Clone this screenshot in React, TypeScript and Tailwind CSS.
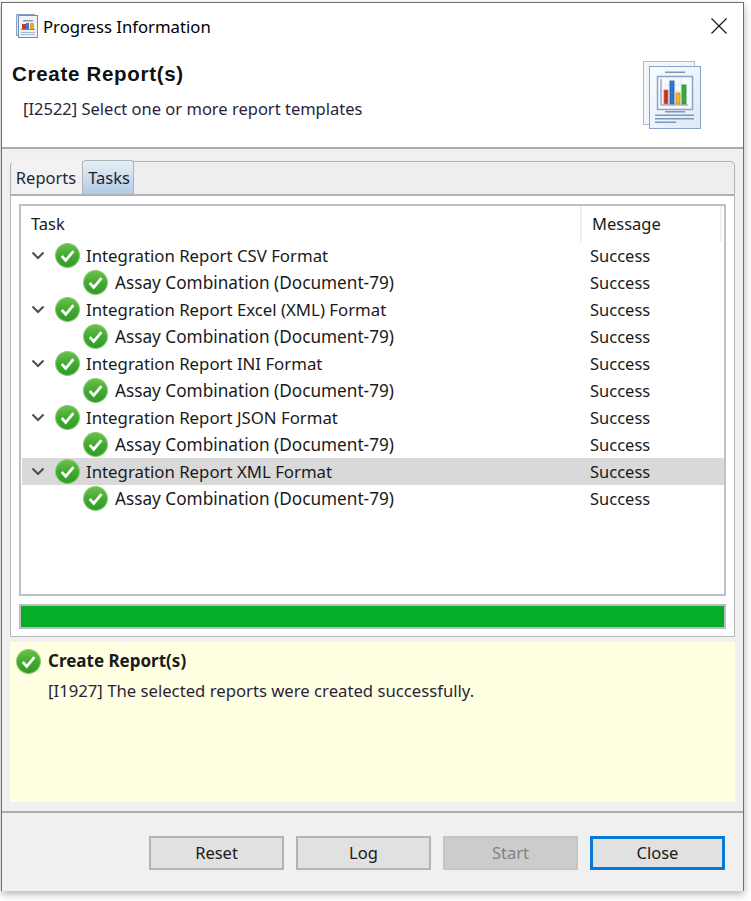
const rows = [
  "Integration Report CSV Format",
  "Integration Report Excel (XML) Format",
  "Integration Report INI Format",
  "Integration Report JSON Format",
  "Integration Report XML Format",
];

function CheckIcon({ size = 25 }: { size?: number }) {
  return (
    <svg width={size} height={size} viewBox="0 0 24 24" className="shrink-0">
      <defs>
        <linearGradient id="okFill" x1="0" y1="0" x2="0" y2="1">
          <stop offset="0" stopColor="#6cc04a" />
          <stop offset="0.55" stopColor="#3fa92f" />
          <stop offset="1" stopColor="#2f9a27" />
        </linearGradient>
      </defs>
      <circle cx="12" cy="12" r="11.5" fill="url(#okFill)" stroke="#8ccb7c" strokeWidth="1" />
      <path d="M6.5 12.5l3.8 4.2 7.4-9" fill="none" stroke="#fff" strokeWidth="2.6" />
    </svg>
  );
}

function Chevron() {
  return (
    <svg width="14" height="9" viewBox="0 0 14 9" className="shrink-0">
      <path d="M1.5 1.5L7 7l5.5-5.5" fill="none" stroke="#4d4d4d" strokeWidth="2" />
    </svg>
  );
}

function SmallReportIcon() {
  return (
    <svg width="22" height="24" viewBox="0 0 22 24" className="shrink-0">
      <rect x="0.500" y="0.500" width="18" height="21" fill="#dbe6f2" stroke="#86a4c6" />
      <rect x="2.500" y="1.500" width="19" height="22" fill="#eef3f9" stroke="#6f8fb5" />
      <rect x="7" y="6" width="10" height="1.500" fill="#8a9bb0" />
      <rect x="6" y="10" width="4" height="5" fill="#d42f2f" />
      <rect x="10" y="9" width="3" height="6" fill="#3f78c9" />
      <rect x="14" y="9" width="4" height="6" fill="#eda51f" />
      <rect x="5" y="15" width="14" height="1" fill="#7d8ea4" />
      <rect x="5" y="18" width="14" height="1" fill="#a9bbd0" />
      <rect x="5" y="20" width="14" height="1" fill="#a9bbd0" />
    </svg>
  );
}

function ReportIcon() {
  return (
    <svg width="58" height="68" viewBox="0 0 58 68" className="shrink-0">
      <defs>
        <linearGradient id="pageFill" x1="0" y1="0" x2="1" y2="1">
          <stop offset="0" stopColor="#fbfdff" />
          <stop offset="1" stopColor="#dce9f6" />
        </linearGradient>
      </defs>
      <rect x="0.500" y="0.500" width="51" height="63" fill="#f3f7fc" stroke="#a3bcd8" />
      <rect x="6.500" y="5.500" width="51" height="62" fill="url(#pageFill)" stroke="#86a5c9" />
      <rect x="22" y="10.500" width="20" height="1.500" fill="#7d97b8" />
      <rect x="14.500" y="15.500" width="35" height="33" fill="#f6f9fd" stroke="#88a5c6" strokeWidth="1.500" />
      <path d="M18 18v26h27" fill="none" stroke="#8a97a6" strokeWidth="1.200" />
      <path d="M19 24h26M19 30h26M19 36h26M26 18v25M32 18v25M38 18v25" stroke="#e3e8ee" strokeWidth="1" />
      <rect x="21" y="29" width="4" height="14" fill="#d3262b" stroke="#b08a50" strokeWidth="0.800" />
      <rect x="27" y="20" width="4" height="23" fill="#2f74d0" stroke="#2a5ca0" strokeWidth="0.800" />
      <rect x="33" y="32" width="4" height="11" fill="#f1b82c" stroke="#c08a20" strokeWidth="0.800" />
      <rect x="39" y="24" width="4" height="19" fill="#37ae3a" stroke="#2f8a30" strokeWidth="0.800" />
      <rect x="22" y="50" width="20" height="1.500" fill="#7d97b8" />
      <rect x="12" y="53.500" width="39" height="1.500" fill="#7d97b8" />
      <rect x="12" y="57" width="39" height="1.500" fill="#7d97b8" />
      <rect x="12" y="60.500" width="21" height="1.500" fill="#7d97b8" />
    </svg>
  );
}

function Btn({ label, kind }: { label: string; kind?: "disabled" | "default" }) {
  if (kind === "disabled") {
    return (
      <div className="w-[135px] h-[34px] flex items-center justify-center bg-[#cccccc] border-2 border-[#c4c4c4] text-[#838383]">
        {label}
      </div>
    );
  }
  if (kind === "default") {
    return (
      <div className="w-[135px] h-[34px] flex items-center justify-center bg-[#e1e1e1] border-[3px] border-[#0a78d7] text-[#1a1a1a]">
        {label}
      </div>
    );
  }
  return (
    <div className="w-[135px] h-[34px] flex items-center justify-center bg-[#e1e1e1] border-2 border-[#b4b4b4] text-[#1a1a1a]">
      {label}
    </div>
  );
}

export default function App() {
  return (
    <div className="w-[751px] h-[901px] bg-white pt-[2px] pl-px font-['Noto_Sans',sans-serif] text-[16.5px] text-[#1a1a1a] overflow-hidden">
      <div className="w-[743px] h-[889px] flex flex-col border-t border-l border-r border-[#6e6e6e] bg-[#f0f0f0] shadow-[0_3px_8px_rgba(0,0,0,0.3)]">
        {/* title + banner */}
        <div className="h-[146px] bg-white border-b-2 border-[#acacac] flex flex-col shrink-0">
          <div className="h-[46px] flex items-center pl-[14px] pr-[16px]">
            <SmallReportIcon />
            <span className="ml-[5px] pt-[2px] text-[16.7px] leading-none text-black">Progress Information</span>
            <svg width="16" height="16" viewBox="0 0 16 16" className="ml-auto">
              <path d="M0.500 0.500l15 15M15.500 0.500l-15 15" stroke="#111" strokeWidth="1.100" />
            </svg>
          </div>
          <div className="flex justify-between pl-[10px] pr-[42px] pt-[14px]">
            <div>
              <div className="font-['Liberation_Sans',sans-serif] font-bold text-[20.5px] tracking-[0.7px] leading-[24px] text-[#111] mt-[-1px]">Create Report(s)</div>
              <div className="ml-[11px] mt-[11px] leading-[24px] text-[#2b1f3a]">[I2522] Select one or more report templates</div>
            </div>
            <div className="mt-[-2px]">
              <ReportIcon />
            </div>
          </div>
        </div>

        {/* tab folder */}
        <div className="flex-1 flex flex-col px-[8px] pt-[12px]">
          <div className="h-[35px] flex items-end border border-b-2 border-[#b2b2b2] rounded-t-[5px] bg-[#eeeeee] pl-[1px] shrink-0">
            <div className="h-[33px] w-[71px] flex items-center justify-center pt-[2px] pr-[2px] text-[#1f2937] border-r border-[#b2b2b2] bg-[#f2f2f2]">Reports</div>
            <div className="h-[34px] w-[51px] flex items-center justify-center pt-[2px] pl-[2px] border-r border-t border-[#aab4bf] rounded-t-[3px] bg-gradient-to-b from-[#e9eff6] to-[#b2cbe4] text-[#1a2433]">Tasks</div>
          </div>
          <div className="h-[441px] bg-white border-x border-b border-[#b8b8b8] px-[8px] pt-[8px] flex flex-col shrink-0">
            <div className="h-[392px] border-2 border-[#c0c0c8] flex flex-col shrink-0">
              <div className="h-[36px] flex items-center shrink-0">
                <div className="w-[561px] h-full flex items-center pl-[10px] border-r-2 border-[#f0f0f0]">Task</div>
                <div className="w-[140px] h-full flex items-center pl-[10px] border-r-2 border-[#f0f0f0]">Message</div>
              </div>
              {rows.map((name, i) => (
                <div key={name} className="ml-px">
                  <div className={`h-[27px] flex items-center ${i === 4 ? "bg-[#d9d9d9]" : ""}`}>
                    <div className="w-[559px] flex items-center pl-[9px]">
                      <Chevron />
                      <span className="ml-[10px]"><CheckIcon /></span>
                      <span className="ml-[6px] text-[16.8px]">{name}</span>
                    </div>
                    <div className="pl-[9px] pt-[2px]">Success</div>
                  </div>
                  <div className="h-[27px] flex items-center">
                    <div className="w-[559px] flex items-center pl-[61px]">
                      <CheckIcon />
                      <span className="ml-[7px] text-[17.2px]">Assay Combination (Document-79)</span>
                    </div>
                    <div className="pl-[9px] pt-[2px]">Success</div>
                  </div>
                </div>
              ))}
            </div>
            <div className="mt-[8px] h-[25px] border-2 border-[#bcbcc4] bg-[#06ad26] shrink-0" />
          </div>

          {/* result message */}
          <div className="mt-[5px] h-[160px] bg-[#ffffe1] shrink-0 pl-[6px]">
            <div className="flex items-center h-[38px]">
              <CheckIcon />
              <span className="ml-[7px] font-bold text-[17px]">Create Report(s)</span>
            </div>
            <div className="ml-[32px] leading-[22px] text-[16.7px] text-[#2b1f3a]">[I1927] The selected reports were created successfully.</div>
          </div>
        </div>

        {/* footer */}
        <div className="h-[80px] border-t-2 border-[#acacac] shrink-0 flex justify-end items-start gap-[12px] pt-[23px] pr-[18px]">
          <Btn label="Reset" />
          <Btn label="Log" />
          <Btn label="Start" kind="disabled" />
          <Btn label="Close" kind="default" />
        </div>
      </div>
    </div>
  );
}
